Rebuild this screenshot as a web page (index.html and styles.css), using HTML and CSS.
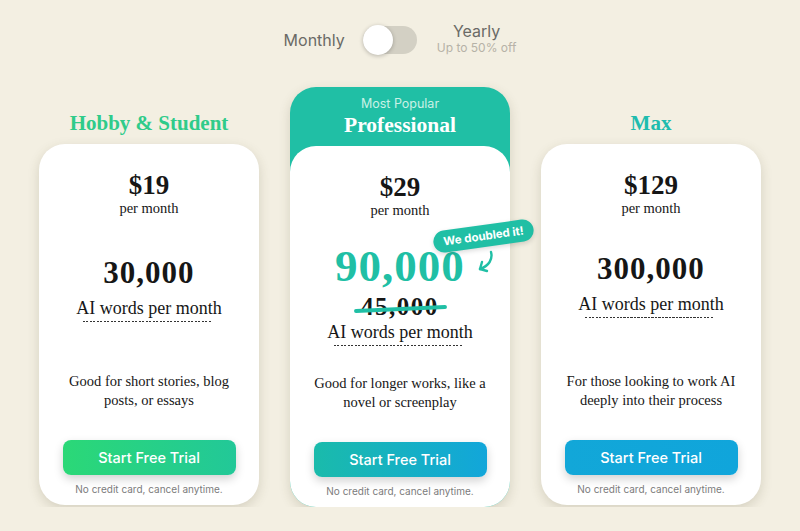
FILE: index.html
```html
<!DOCTYPE html>
<html lang="en">
<head>
<meta charset="utf-8">
<title>Pricing</title>
<link rel="stylesheet" href="styles.css">
</head>
<body>
<div class="billing">
  <span class="billing-label">Monthly</span>
  <div class="switch"><div class="knob"></div></div>
  <div class="yearly">
    <span class="billing-label">Yearly</span>
    <span class="yearly-sub">Up to 50% off</span>
  </div>
</div>

<div class="plans">
  <div class="plan">
    <div class="plan-head"><h2 class="plan-name name-hobby">Hobby &amp; Student</h2></div>
    <div class="card">
      <div class="price"><div class="amount">$19</div><div class="per">per month</div></div>
      <div class="words">
        <div class="count">30,000</div>
        <div class="words-label">AI words per month</div>
      </div>
      <p class="desc">Good for short stories, blog posts, or essays</p>
      <button class="cta cta-hobby">Start Free Trial</button>
      <div class="note">No credit card, cancel anytime.</div>
    </div>
  </div>

  <div class="plan plan-popular">
    <div class="popular-head">
      <div class="popular-tag">Most Popular</div>
      <h2 class="plan-name name-pro">Professional</h2>
    </div>
    <div class="card">
      <div class="price"><div class="amount">$29</div><div class="per">per month</div></div>
      <div class="words words-pro">
        <div class="count count-big">90,000</div>
        <div class="old-count"><span class="strike">45,000</span></div>
        <div class="words-label">AI words per month</div>
      </div>
      <p class="desc">Good for longer works, like a novel or screenplay</p>
      <button class="cta cta-pro">Start Free Trial</button>
      <div class="note">No credit card, cancel anytime.</div>
      <div class="badge">We doubled it!</div>
      <svg class="badge-arrow" width="24" height="26" viewBox="0 0 24 26" fill="none" stroke="#20bfa5" stroke-width="2.4" stroke-linecap="round" stroke-linejoin="round">
        <path d="M17 2 C19 9 15 16 6 19"/>
        <path d="M8 12 L6 19 L13 21"/>
      </svg>
    </div>
  </div>

  <div class="plan">
    <div class="plan-head"><h2 class="plan-name name-max">Max</h2></div>
    <div class="card">
      <div class="price"><div class="amount">$129</div><div class="per">per month</div></div>
      <div class="words words-max">
        <div class="count">300,000</div>
        <div class="words-label">AI words per month</div>
      </div>
      <p class="desc">For those looking to work AI deeply into their process</p>
      <button class="cta cta-max">Start Free Trial</button>
      <div class="note">No credit card, cancel anytime.</div>
    </div>
  </div>
</div>
</body>
</html>
```

FILE: styles.css
```css
* { box-sizing: border-box; }

body {
  margin: 0;
  background: #f3efe2;
  font-family: "Liberation Serif", "DejaVu Serif", serif;
  color: #161616;
}

.billing {
  height: 80px;
  display: flex;
  justify-content: center;
  align-items: center;
  font-family: Inter, "Noto Sans", sans-serif;
}

.billing-label {
  font-size: 16px;
  color: #6a6a66;
}

.switch {
  width: 54px;
  height: 28px;
  border-radius: 14px;
  background: #d3d0c4;
  margin: 0 20px 0 18px;
  position: relative;
}

.knob {
  width: 30px;
  height: 30px;
  border-radius: 50%;
  background: #fff;
  margin-top: -1px;
  box-shadow: 0 1px 4px rgba(0,0,0,0.25);
}

.yearly {
  display: flex;
  flex-direction: column;
  align-items: center;
  line-height: 18px;
  margin-top: -3px;
}

.yearly-sub {
  font-size: 12px;
  color: #b6b2a7;
  line-height: 16px;
}

.plans {
  margin-top: 7px;
  display: flex;
  justify-content: center;
  gap: 31px;
}

.plan {
  width: 220px;
  display: flex;
  flex-direction: column;
}

.plan-head {
  height: 57px;
  padding-top: 24px;
  text-align: center;
}

.plan-name {
  margin: 0;
  font-size: 21px;
  line-height: 24px;
  font-weight: 700;
}

.name-hobby { color: #2fcb8a; }
.name-max { color: #1fbcae; }
.name-pro { color: #fff; font-size: 21.5px; line-height: 26px; }

.plan-popular {
  background: #20bfa5;
  border-radius: 26px;
  box-shadow: 0 4px 12px rgba(80,70,40,0.18);
}

.popular-head {
  height: 59px;
  text-align: center;
  padding-top: 9px;
}

.popular-tag {
  font-family: Inter, "Noto Sans", sans-serif;
  font-size: 12.5px;
  line-height: 16px;
  color: #c9f1e6;
}

.card {
  position: relative;
  height: 361px;
  background: #fff;
  border-radius: 26px;
  box-shadow: 0 4px 12px rgba(80,70,40,0.18);
  display: flex;
  flex-direction: column;
  align-items: center;
  padding: 26px 0 9px;
  text-align: center;
}

.plan-popular .card { box-shadow: none; }

.price { height: 46px; }

.amount {
  font-size: 27px;
  line-height: 30px;
  font-weight: 700;
}

.per {
  font-size: 14.5px;
  line-height: 16px;
}

.words {
  flex: 1;
  display: flex;
  flex-direction: column;
  justify-content: center;
  align-items: center;
  padding-bottom: 9px;
}

.words-pro { padding-bottom: 6px; }
.words-max { padding-bottom: 17px; }

.count {
  font-size: 31px;
  line-height: 32px;
  font-weight: 700;
  letter-spacing: 1px;
  margin-bottom: 8px;
}

.count-big {
  font-size: 45px;
  line-height: 52px;
  color: #20bfa5;
  letter-spacing: 1px;
  margin-bottom: 0;
}

.old-count {
  font-size: 25px;
  line-height: 29px;
  font-weight: 700;
  letter-spacing: 1.5px;
}

.strike { position: relative; }

.strike::after {
  content: "";
  position: absolute;
  left: -7px;
  right: -8px;
  top: 14px;
  height: 4px;
  border-radius: 2px;
  background: #20bfa5;
  transform: rotate(-2.5deg);
}

.words-label {
  position: relative;
  font-size: 18px;
  line-height: 22px;
  padding-bottom: 3px;
}

.words-label::after {
  content: "";
  position: absolute;
  left: 7px;
  right: 11px;
  bottom: 0;
  height: 1px;
  background: repeating-linear-gradient(90deg, #333 0 2px, transparent 2px 3.5px);
}

.desc {
  margin: 0;
  width: 180px;
  font-size: 14.5px;
  line-height: 19px;
  height: 38px;
}

.cta {
  margin-top: 30px;
  width: 173px;
  height: 35px;
  border: 0;
  border-radius: 8px;
  color: #fff;
  font-family: Inter, "Noto Sans", sans-serif;
  font-size: 14.5px;
  font-weight: 500;
  box-shadow: 0 4px 10px rgba(0,0,0,0.18);
}

.cta-hobby { background: linear-gradient(90deg, #2bd877, #22c898); }
.cta-pro { background: linear-gradient(90deg, #1abbab, #12a6da); }
.cta-max { background: linear-gradient(90deg, #12a7d8, #10a5db); }

.note {
  margin-top: 7px;
  font-family: Inter, "Noto Sans", sans-serif;
  font-size: 10px;
  line-height: 14px;
  color: #7b7b7b;
}

.badge {
  position: absolute;
  left: 143px;
  top: 79px;
  width: 101px;
  height: 22px;
  border-radius: 11px;
  background: #20bfa5;
  color: #fff;
  font-family: Inter, "Noto Sans", sans-serif;
  font-size: 11.5px;
  font-weight: 700;
  line-height: 22px;
  text-align: center;
  transform: rotate(-8deg);
  box-shadow: 0 2px 5px rgba(0,0,0,0.15);
}

.badge-arrow {
  position: absolute;
  left: 184px;
  top: 104px;
}
```
